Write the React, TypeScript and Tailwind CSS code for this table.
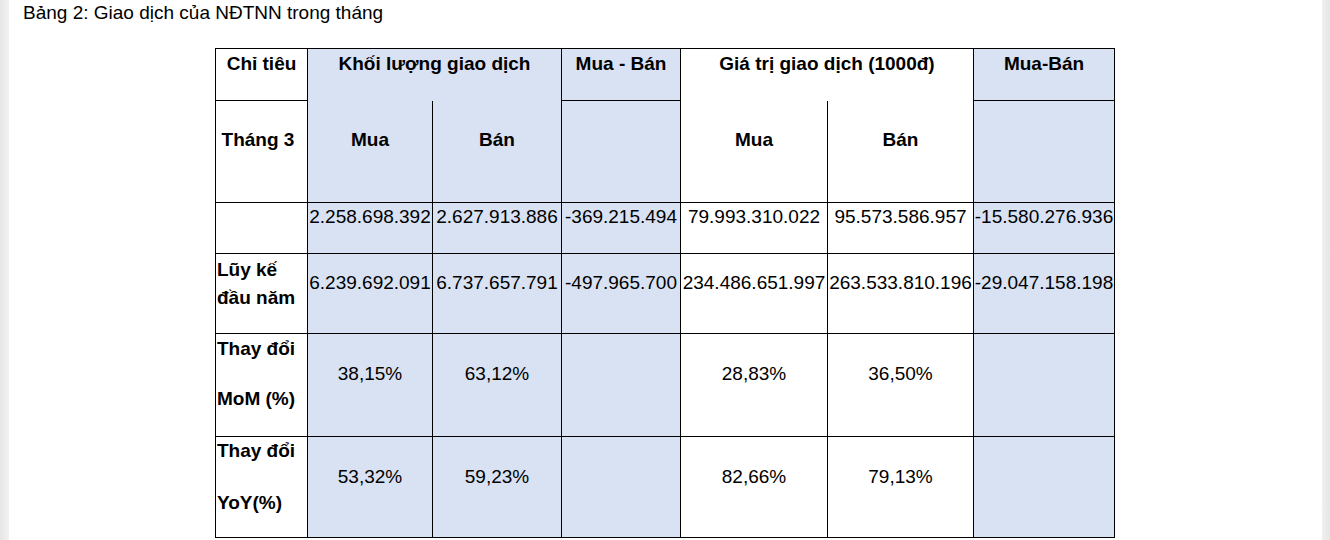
import React from "react";

// Bảng 2 — giao dịch của nhà đầu tư nước ngoài, kiểu bảng Word trên trang giấy trắng

const cell = "border border-black p-0 align-top";
const blue = "bg-[#d9e2f3]";

interface BodyRow {
  height: string;
  label: string[];
  labelPad: string;
  labelLeading: string;
  labelGap: string;
  valuePad: string;
  values: string[];
}

const bodyRows: BodyRow[] = [
  {
    height: "h-[51px]",
    label: [],
    labelPad: "pt-[3px]",
    labelLeading: "leading-[22px]",
    labelGap: "",
    valuePad: "pt-[3px]",
    values: ["2.258.698.392", "2.627.913.886", "-369.215.494", "79.993.310.022", "95.573.586.957", "-15.580.276.936"],
  },
  {
    height: "h-[80px]",
    label: ["Lũy kế", "đầu năm"],
    labelPad: "pt-[2px]",
    labelLeading: "leading-[28px]",
    labelGap: "",
    valuePad: "pt-[18px]",
    values: ["6.239.692.091", "6.737.657.791", "-497.965.700", "234.486.651.997", "263.533.810.196", "-29.047.158.198"],
  },
  {
    height: "h-[103px]",
    label: ["Thay đổi", "MoM (%)"],
    labelPad: "pt-[4px]",
    labelLeading: "leading-[22px]",
    labelGap: "mt-[28px]",
    valuePad: "pt-[29px]",
    values: ["38,15%", "63,12%", "", "28,83%", "36,50%", ""],
  },
  {
    height: "h-[101px]",
    label: ["Thay đổi", "YoY(%)"],
    labelPad: "pt-[3px]",
    labelLeading: "leading-[22px]",
    labelGap: "mt-[30px]",
    valuePad: "pt-[29px]",
    values: ["53,32%", "59,23%", "", "82,66%", "79,13%", ""],
  },
];

// cột 2, 3, 4 và 7 tô xanh
const blueCols = [true, true, true, false, false, true];

export default function App() {
  return (
    <div
      className="flex h-[540px] w-full overflow-hidden bg-white text-black"
      style={{ fontFamily: "'Liberation Sans', Arial, sans-serif" }}
    >
      {/* viền xám bên trái */}
      <div className="w-[9px] shrink-0 bg-gradient-to-r from-[#e6e6e6] to-[#f2f2f2]" />

      <div className="flex-1 bg-white">
        <p className="pl-[14px] pt-[2px] text-[19px] leading-[22px]">Bảng 2: Giao dịch của NĐTNN trong tháng</p>

        <table className="ml-[206px] mt-[24px] table-fixed border-collapse text-[19px] leading-[22px]">
          <colgroup>
            <col className="w-[92px]" />
            <col className="w-[125px]" />
            <col className="w-[129px]" />
            <col className="w-[119px]" />
            <col className="w-[147px]" />
            <col className="w-[146px]" />
            <col className="w-[141px]" />
          </colgroup>
          <thead>
            <tr className="h-[52px] font-bold">
              <th className={`${cell} pt-[4px] text-center`}>Chỉ tiêu</th>
              <th colSpan={2} className={`${cell} ${blue} border-b-0 pt-[4px] text-center`}>
                Khối lượng giao dịch
              </th>
              <th className={`${cell} ${blue} pt-[4px] text-center`}>Mua - Bán</th>
              <th colSpan={2} className={`${cell} border-b-0 pt-[4px] text-center`}>
                Giá trị giao dịch (1000đ)
              </th>
              <th className={`${cell} ${blue} pt-[4px] text-center`}>Mua-Bán</th>
            </tr>
            <tr className="h-[102px] font-bold">
              <th className={`${cell} pr-[7px] pt-[28px] text-center`}>Tháng 3</th>
              <th className={`${cell} ${blue} border-t-0 pt-[28px] text-center`}>Mua</th>
              <th className={`${cell} ${blue} border-t-0 pt-[28px] text-center`}>Bán</th>
              <th className={`${cell} ${blue}`} />
              <th className={`${cell} border-t-0 pt-[28px] text-center`}>Mua</th>
              <th className={`${cell} border-t-0 pt-[28px] text-center`}>Bán</th>
              <th className={`${cell} ${blue}`} />
            </tr>
          </thead>
          <tbody>
            {bodyRows.map((row, i) => (
              <tr key={i} className={row.height}>
                <td className={`${cell} ${row.labelPad} pl-[1px] text-left font-bold`}>
                  {row.label.map((line, j) => (
                    <div key={j} className={`${row.labelLeading} ${j > 0 ? row.labelGap : ""}`}>
                      {line}
                    </div>
                  ))}
                </td>
                {row.values.map((v, j) => (
                  <td
                    key={j}
                    className={`${cell} ${row.valuePad} whitespace-nowrap text-center ${blueCols[j] ? blue : ""}`}
                  >
                    {v}
                  </td>
                ))}
              </tr>
            ))}
          </tbody>
        </table>
      </div>

      {/* viền xám bên phải */}
      <div className="w-[8px] shrink-0 bg-gradient-to-r from-[#f0f0f0] to-[#e6e6e6]" />
    </div>
  );
}
